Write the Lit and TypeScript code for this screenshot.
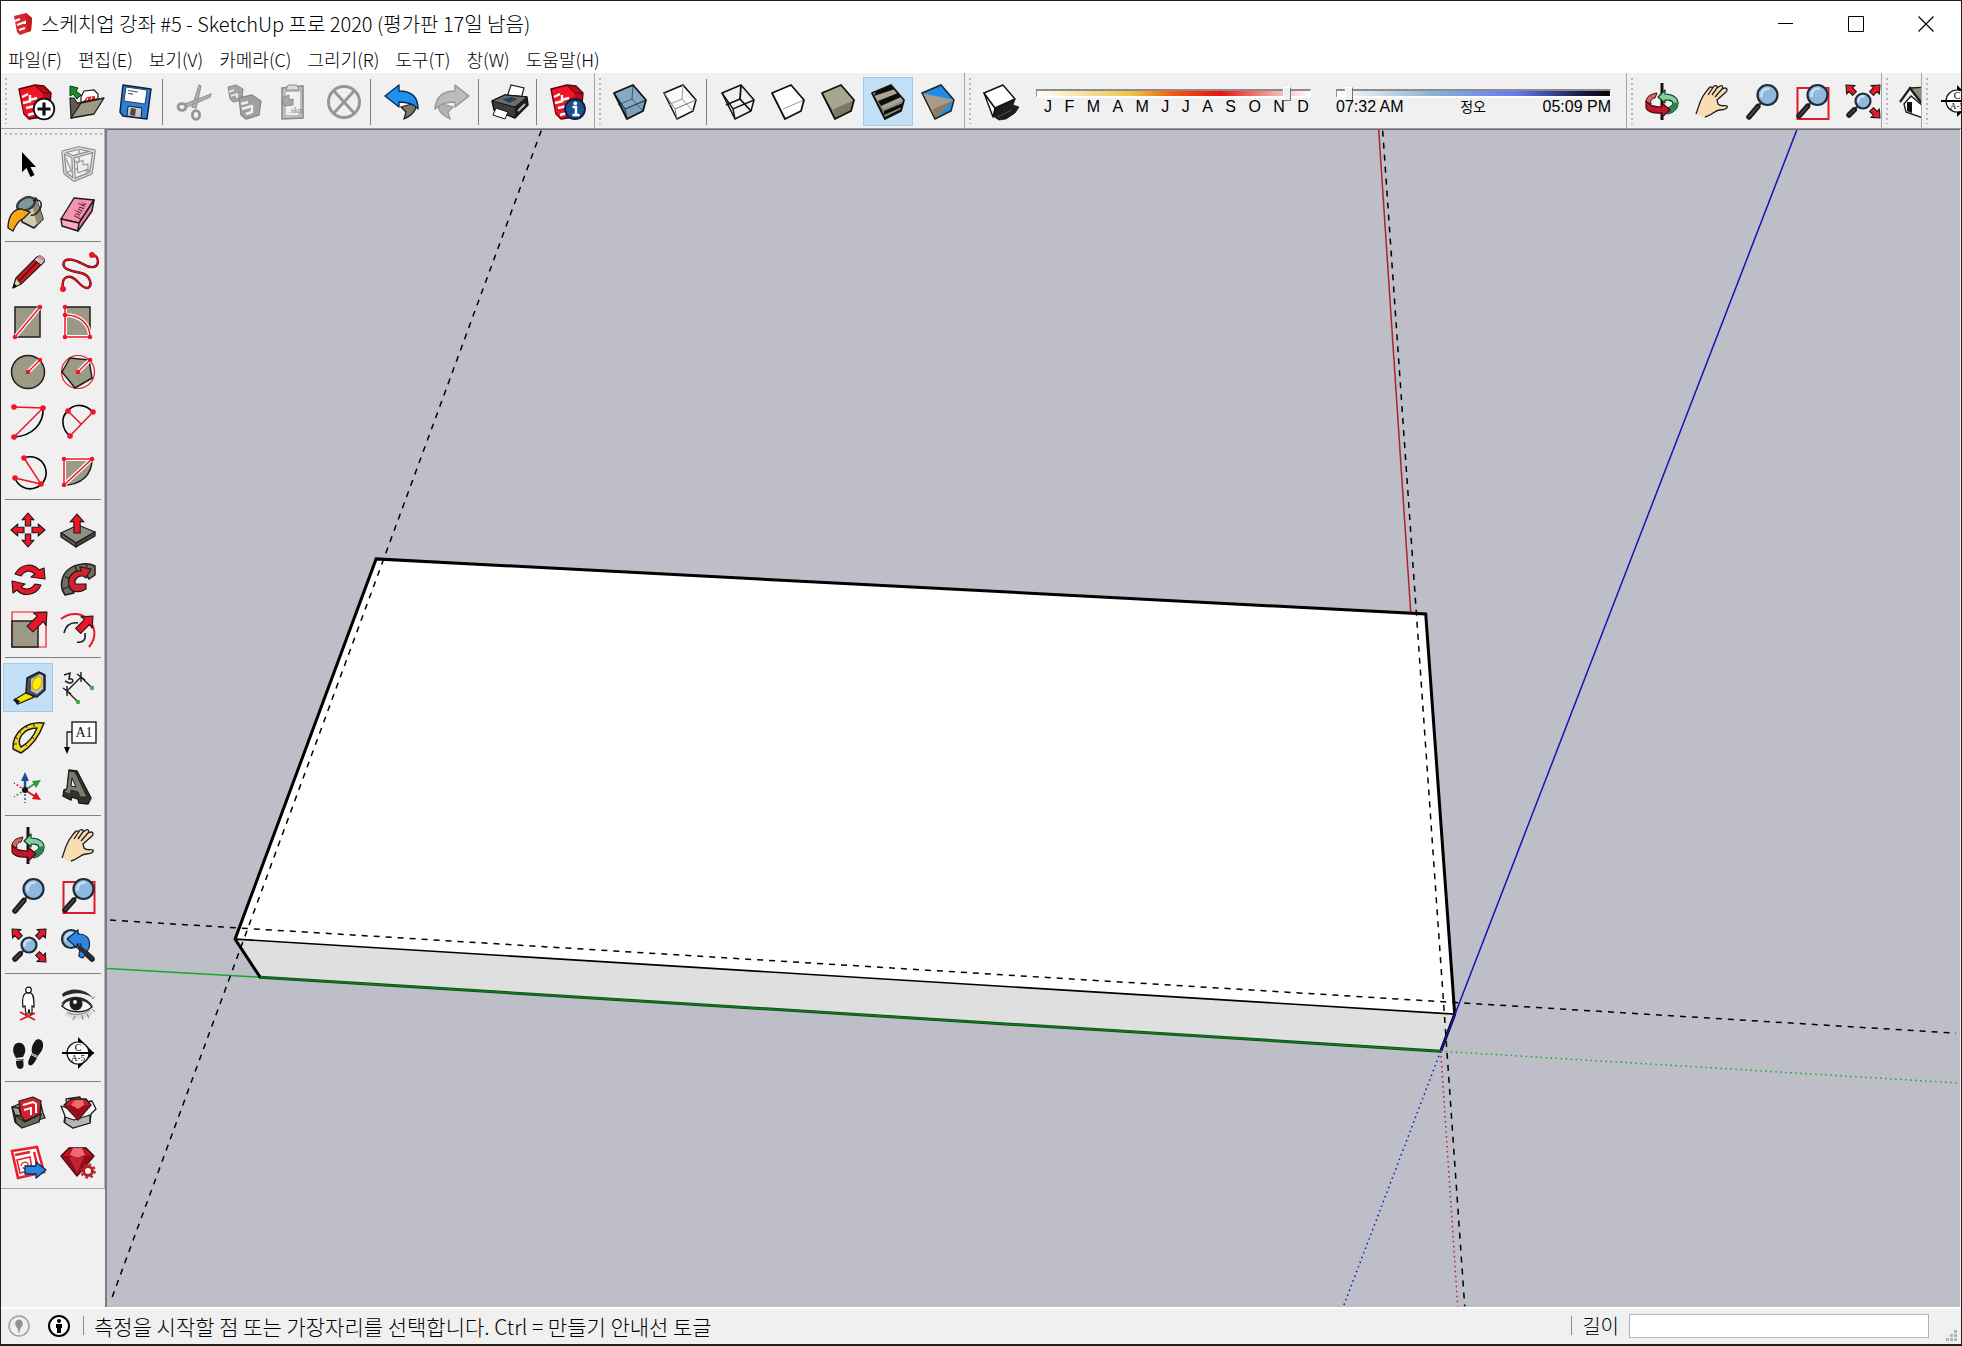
import { LitElement, html, svg, css } from "lit";
import type { TemplateResult } from "lit";
import { customElement, property } from "lit/decorators.js";
import { classMap } from "lit/directives/class-map.js";

type Shape = TemplateResult;

const K = "#1c1c1c";
const RED = "#ee1626";
const CLAY = "#9c9a85";

/* ---------- shared glyph parts, drawn on a 50 x 50 cell ---------- */

const lensAt = (cx: number, cy: number, r: number, hx: number, hy: number): Shape => {
  const d = Math.hypot(hx - cx, hy - cy);
  const ux = (hx - cx) / d;
  const uy = (hy - cy) / d;
  const mx = cx + ux * (r + 5);
  const my = cy + uy * (r + 5);
  return svg`
    <path d="M${cx + ux * r} ${cy + uy * r}L${hx} ${hy}" stroke="#444" stroke-width="2.5" fill="none"/>
    <path d="M${mx} ${my}L${hx} ${hy}" stroke=${K} stroke-width="5.5" stroke-linecap="round" fill="none"/>
    <path d="M${mx} ${my}L${hx} ${hy}" stroke="#4a4a4a" stroke-width="1.5" stroke-linecap="round" fill="none"/>
    <circle cx=${cx} cy=${cy} r=${r} fill="#8fb9dc" stroke="#1e2c3a" stroke-width="2.2"/>
    <path d="M${cx - r * 0.55} ${cy + r * 0.2}A${r * 0.6} ${r * 0.6} 0 0 1 ${cx + r * 0.2} ${cy - r * 0.6}" stroke="#c9e0f3" stroke-width="2.4" fill="none"/>`;
};

const arrow = (x: number, y: number, angle: number, len: number, w: number): Shape => svg`
  <path transform="translate(${x} ${y}) rotate(${angle})"
    d="M0 0L${-w} ${w * 1.15}L${-w * 0.45} ${w * 1.05}L${-w * 0.45} ${len}L${w * 0.45} ${len}L${w * 0.45} ${w * 1.05}L${w} ${w * 1.15}Z"
    fill=${RED} stroke=${K} stroke-width="1.1" stroke-linejoin="round"/>`;

const dots = (...pts: number[][]): Shape[] =>
  pts.map(([x, y]) => svg`<circle cx=${x} cy=${y} r="2.3" fill=${RED}/>`);

const halo = (d: string): Shape => svg`
  <path d=${d} fill="none" stroke="#fff" stroke-width="4"/>
  <path d=${d} fill="none" stroke=${RED} stroke-width="1.5"/>`;

const sheet = (a: string, b: string, line: string): Shape => svg`
  <path d="M8 12L24 8L33 9L40 16L38 39L18 42L13 37Z" fill=${a} stroke=${line} stroke-width="1.4" stroke-linejoin="round"/>
  <path d="M9 13L24 9L32 17L31 37L18 41L13 36Z" fill=${b}/>
  <path d="M24 8L32 16L40 16" fill="none" stroke=${line} stroke-width="1"/>
  <path d="M11 20L17 17M12 26L20 24M19 18V23L26 21" fill="none" stroke="#fff" stroke-width="2.4"/>
  <path d="M15 31L24 29V36L17 38" fill="none" stroke="#fff" stroke-width="2.4"/>`;

const TOP = "M9 16L28 8L41 23L20 32Z";
const FRONT = "M20 32L41 23L38 34L22 42Z";
const SIDE = "M9 16L20 32L22 42Z";
const HULL = "M9 16L28 8L41 23L38 34L22 42Z";

const cube = (top: string, front: string, side: string, extra: Shape = svg``): Shape => svg`
  <path d=${TOP} fill=${top}/><path d=${FRONT} fill=${front}/><path d=${SIDE} fill=${side}/>
  ${extra}
  <path d=${HULL} fill="none" stroke="#111" stroke-width="1.8" stroke-linejoin="round"/>`;

const inner = (c: string, w: number): Shape => svg`
  <path d="M9 16L20 32L41 23M20 32L22 42" fill="none" stroke=${c} stroke-width=${w}/>`;

const hidden = (c: string, w: number): Shape => svg`
  <path d="M28 8L27 22L13 28M27 22L38 34" fill="none" stroke=${c} stroke-width=${w}/>`;

const icons: Record<string, Shape> = {
  newFile: svg`${sheet("#b90d1b", RED, "#5a0008")}
    <circle cx="33" cy="32" r="10.3" fill="#fff" stroke="#111" stroke-width="1.8"/>
    <path d="M33 25.5V38.5M26.5 32H39.5" stroke="#111" stroke-width="3.2"/>`,
  open: svg`
    <path d="M20 20L23 14L33 13L37 17V28H20Z" fill="#fff" stroke=${K} stroke-width="1.2"/>
    <path d="M22 25L26 20L34 19V26Z" fill=${RED}/><path d="M25 25L27 21M29 25L31 20" stroke="#fff"/>
    <path d="M9 21L10 41L14 40L22 27L36 24V22L16 26L13 21Z" fill="#5f5d50" stroke=${K} stroke-width="1.2"/>
    <path d="M10 41L20 26L43 21L33 37Z" fill=${CLAY} stroke=${K} stroke-width="1.3" stroke-linejoin="round"/>
    <path d="M9 9L17 11L15 14L20 18L16 22L12 17L9 19Z" fill="#1e8a22" stroke="#083d0a" stroke-width="1"/>`,
  save: svg`
    <path d="M12 8L40 12L36 42L12 39L9 35Z" fill="#2f7fd6" stroke="#0d2340" stroke-width="1.5" stroke-linejoin="round"/>
    <path d="M15 10L36 13L34 27L13 24Z" fill="#fff" stroke="#0d2340" stroke-width=".8"/>
    <path d="M17 13.500L27 15M17 16.500L22 17.200" stroke="#555" stroke-width="1.2"/>
    <path d="M17 29L31 31L30 41L16 39Z" fill="#c4c4c4" stroke="#0d2340" stroke-width="1"/>
    <path d="M20 31L25 32L24 39L19 38Z" fill="#4a4a4a"/>`,
  cut: svg`<g stroke="#969696">
    <path d="M30 8L32 9L27 31L23 30ZM42 17L41 20L18 30L16 27Z" fill="#b4b4b4" stroke-width="1.200"/>
    <ellipse cx="13" cy="30" rx="4" ry="3.400" fill="none" stroke-width="2.800"/><ellipse cx="27" cy="38" rx="3.600" ry="4.400" fill="none" stroke-width="2.800"/></g>`,
  copy: svg`<g stroke="#8a8a8a" stroke-linejoin="round">
    <path d="M9 10L17 8L24 12L23 23L14 25L11 22Z" fill="#a3a3a3"/>
    <path d="M10 15L15 13M12 19L18 17V21" fill="none" stroke="#f0f0f0" stroke-width="1.800"/>
    <path d="M20 21L33 18L42 24L40 38L27 42L22 38Z" fill="#a0a0a0" stroke-width="1.400"/>
    <path d="M22 27L29 25M23 32L33 29V35L27 37" fill="none" stroke="#f0f0f0" stroke-width="2.400"/></g>`,
  paste: svg`<g stroke="#8c8c8c"><path d="M13 11L34 9V41L13 42Z" fill="#bdbdbd" stroke-width="1.600"/>
    <path d="M17 15H31V38H17Z" fill="#f1f1f1" stroke="none"/>
    <path d="M19 8H28L30 13H17Z" fill="#dcdcdc"/>
    <path d="M13 21L20 18V23L24 22V28L15 29Z" fill="#a8a8a8"/></g>
    <text x="20" y="36" font-size="8" font-family="Liberation Serif, serif" fill="#7c7c7c">.skp</text>`,
  stop: svg`<ellipse cx="25" cy="25" rx="15.500" ry="15.500" fill="none" stroke="#969696" stroke-width="3"/>
    <path d="M15 14L35 36M35 14L15 36" stroke="#969696" stroke-width="3"/>`,
  undo: svg`<path d="M24 30L39 26C40 33 36 38 27 42L29 35Z" fill="#7a796a" stroke=${K} stroke-width="1.200"/>
    <path d="M8 19L22 8V14C34 14 41 20 41 32C37 27 32 25 22 25V30Z" fill="#1e90ee" stroke="#0b2b4a" stroke-width="1.400" stroke-linejoin="round"/>`,
  redo: svg`<path d="M26 30L12 26C10 33 14 38 23 42L21 35Z" fill="#b3b3b3" stroke="#969696" stroke-width="1.200"/>
    <path d="M42 19L28 8V14C16 14 9 20 8 32C13 27 18 25 28 25V30Z" fill="#bcbcbc" stroke="#969696" stroke-width="1.400" stroke-linejoin="round"/>`,
  print: svg`
    <path d="M22 20L26 8L39 11L36 22Z" fill="#fff" stroke=${K} stroke-width="1.200"/>
    <path d="M7 24L20 18L42 20L43 28L30 41L9 33Z" fill="#3c3c3c" stroke="#111" stroke-width="1.400" stroke-linejoin="round"/>
    <path d="M7 24L20 18L42 20L30 30Z" fill="#6d6d6d" stroke="#111"/>
    <path d="M17 22L27 20L33 22L24 26Z" fill="#24425f"/>
    <path d="M30 30L42 21V28L30 40Z" fill="#1d1d1d"/><path d="M33 34L40 27" stroke="#bbb" stroke-width="2"/>
    <path d="M11 31L23 35L20 42L8 38Z" fill="#fff" stroke="#111"/>`,
  info: svg`${sheet("#b90d1b", RED, "#5a0008")}
    <circle cx="32" cy="32" r="10" fill="#1d4f91" stroke="#0b1f3c" stroke-width="1.800"/>
    <path d="M29.500 30H33V38M29.500 38H36.500" stroke="#fff" stroke-width="2.400" fill="none"/><circle cx="32.300" cy="26.300" r="1.900" fill="#fff"/>`,
  xray: cube("#86aac3", "#7ba0b9", "#6b91ab", svg`${hidden("#3d5a6e", 1)}${inner("#22394a", 1.2)}`),
  backEdges: svg`<path d=${HULL} fill="#fbfbfb" stroke="#111" stroke-width="1.500"/>${hidden("#999", 1)}${inner("#777", 1)}`,
  wireframe: svg`<path d=${HULL} fill="none" stroke="#111" stroke-width="1.500"/>${hidden("#111", 1.8)}${inner("#111", 1.4)}`,
  hiddenLine: cube("#fff", "#fff", "#fff", svg`<path d="M20 32L41 23" stroke="#999" stroke-width="1"/>`),
  shaded: cube("#a8a690", "#7b7967", "#8c8a76"),
  textured: cube("#a8a690", "#8c8a76", "#6b695a", svg`
    <path d="M13 14.500L28 8L32 12L11 19ZM15 24L35 16L38 20L18 29ZM21 34L40 26L39 30L21 38ZM22 42L38 34V32L22 40Z" fill="#0c0c0c"/>`),
  mono: svg`<path d=${HULL} fill="#1e8cec"/><path d="M9 16L41 23L22 42Z" fill="#a79d88"/>
    <path d="M20 32L41 23L22 42Z" fill="#8a7c67"/><path d="M38 25L38 34L27 39Z" fill="#1e8cec"/>
    <path d=${HULL} fill="none" stroke="#222" stroke-width="1.500"/>`,
  shadow: svg`<path d="M19 31L40 22L38 28L44 30L40 36L31 42L24 43L18 39Z" fill="#1c1c1c" stroke="#111" stroke-width=".8"/>
    <path d="M9 16L20 31L18 40Z" fill="#fff" stroke="#111" stroke-width="1.400" stroke-linejoin="round"/>
    <path d="M9 16L28 8L40 22L20 31Z" fill="#fff" stroke="#111" stroke-width="1.400" stroke-linejoin="round"/>
    <path d="M22 40L37 33" stroke="#4c4c4c" stroke-width="1"/>`,
  select: svg`<path d="M19 13V33L23.500 29L27.500 38L31.500 36L27.500 28H33Z" fill="#000"/>`,
  component: svg`<g fill="none" stroke="#8a8a8a" stroke-width="3.600" stroke-linejoin="round">
    <path d="M10 13L26 9L41 12L38 34L21 41L12 34Z"/><path d="M10 13L20 18L41 12M20 18L21 41"/></g>
    <g fill="none" stroke="#a2a2a2" stroke-width="1.600"><path d="M26 9V29L12 34M26 29L38 34M12 18L21 37M22 22L37 32"/></g>
    <g fill="none" stroke="#dedede" stroke-width="1.300"><path d="M10 13L26 9L41 12L38 34L21 41L12 34Z"/><path d="M10 13L20 18L41 12M20 18L21 41"/></g>
    <path d="M24 24L30 21V26L35 25V30L25 34Z" fill="#ececec" stroke="#8a8a8a"/>`,
  bucket: svg`
    <path d="M17 14L33 9L40 30L31 39L19 33Z" fill="#cfcbab" stroke=${K} stroke-width="1.600" stroke-linejoin="round"/>
    <path d="M28 12L34 11L40 30L34 36Z" fill="#8c8a72"/>
    <ellipse cx="23" cy="15" rx="9.500" ry="6" transform="rotate(-28 23 15)" fill="#7c9a9a" stroke="#3a3a36" stroke-width="2.400"/>
    <path d="M18 20C10 20 5 28 5 39L10 42C13 35 17 31 21 29L27 23Z" fill="#f7a614" stroke=${K} stroke-width="1.300"/>
    <path d="M30 12C37 9 40 14 37 20C35 24 31 27 28 26" fill="none" stroke=${K} stroke-width="1.500"/>`,
  eraser: svg`<g stroke=${K} stroke-width="1.400" stroke-linejoin="round">
    <path d="M8 30L21 9L41 11L26 34Z" fill="#f793b0"/><path d="M8 30L26 34L25 42L9 37Z" fill="#ffa9bf"/>
    <path d="M26 34L41 11L39 22L25 42Z" fill="#ee7d9b"/></g>
    <text x="25" y="30" transform="rotate(-62 25 30)" font-size="10" font-family="Liberation Serif, serif" fill="#3a0d1c">pink</text>`,
  pencil: svg`<path d="M10 41L13 31L34 10L41 15L18 37Z" fill="#d61a22" stroke=${K} stroke-width="1.300" stroke-linejoin="round"/>
    <path d="M16 34L37 12" stroke="#7c0a10" stroke-width="2.500"/>
    <path d="M34 10C37 7 43 11 41 15L38 18L31 13Z" fill="#c4c0c4" stroke=${K}/><path d="M36 9C39 8 42 11 41 14L35 11Z" fill="#e8768c"/>
    <path d="M10 41L13 31L18 37Z" fill="#e8cf9a" stroke=${K}/><path d="M10 41L11.500 37L14 39Z" fill="#000"/>`,
  freehand: svg`<path d="M10 41C8 31 14 29 18 30C25 32 28 42 35 41C40 38 37 28 28 26C18 24 8 22 11 15C14 10 24 14 30 17C36 21 44 22 45 15C45 10 42 8 39 8" fill="none" stroke="#5a060c" stroke-width="2.400"/>
    <path d="M10 41C8 31 14 29 18 30C25 32 28 42 35 41C40 38 37 28 28 26C18 24 8 22 11 15C14 10 24 14 30 17C36 21 44 22 45 15C45 10 42 8 39 8" fill="none" stroke="#dc1322" stroke-width="1.500"/>
    <circle cx="10" cy="42" r="3" fill=${RED}/><circle cx="39" cy="8" r="3" fill=${RED}/>`,
  rect: svg`<rect x="12" y="10" width="25" height="30" fill=${CLAY} stroke=${K} stroke-width="1.500"/>${halo("M12 40L37 10")}${dots([12, 40], [37, 10])}`,
  rotRect: svg`<rect x="12" y="10" width="25" height="30" fill=${CLAY} stroke=${K} stroke-width="1.500"/>
    ${halo("M12 10V40H37C37 27 27 18 12 18")}${dots([12, 10], [12, 18], [12, 40], [37, 40])}`,
  circle: svg`<circle cx="25" cy="25" r="16.500" fill=${CLAY} stroke=${K} stroke-width="1.500"/>${halo("M25 25L37 13")}${dots([25, 25], [37, 13])}`,
  polygon: svg`<circle cx="25" cy="25" r="16.500" fill="none" stroke=${RED} stroke-width="1.200"/>
    <path d="M9 25L17 11L36 13L39 31L22 41Z" fill=${CLAY} stroke=${K} stroke-width="1.500"/>${halo("M25 25L37 13")}${dots([25, 25], [37, 13])}`,
  arc: svg`<path d="M40 11C41 26 30 39 11 40" fill="none" stroke="#000" stroke-width="1.600"/>
    <path d="M11 10L40 11L11 40" fill="none" stroke=${RED} stroke-width="1.500"/>
    <circle cx="11" cy="10" r="2.800" fill=${RED}/><circle cx="40" cy="11" r="2.800" fill=${RED}/><circle cx="11" cy="40" r="2.800" fill=${RED}/>`,
  arc2: svg`<path d="M40 15C29 4 18 9 15 14C7 20 9 33 17 39" fill="none" stroke="#000" stroke-width="1.600"/>
    <path d="M17 39L40 15M15 14L28 27" fill="none" stroke=${RED} stroke-width="1.500"/>
    <circle cx="15" cy="14" r="2.800" fill=${RED}/><circle cx="40" cy="15" r="2.800" fill=${RED}/><circle cx="17" cy="39" r="2.800" fill=${RED}/>`,
  arc3: svg`<path d="M21 11A16 16 0 1 1 12 31" fill="none" stroke="#000" stroke-width="1.600"/>
    <path d="M21 11L38 37L12 31" fill="none" stroke=${RED} stroke-width="1.500"/>
    <circle cx="21" cy="11" r="2.800" fill=${RED}/><circle cx="12" cy="31" r="2.800" fill=${RED}/><circle cx="38" cy="37" r="2.800" fill=${RED}/>`,
  pie: svg`<path d="M11 12H39C39 28 28 38 11 38Z" fill=${CLAY} stroke=${K} stroke-width="1.500"/>${halo("M11 38V12H39Z")}${dots([11, 12], [39, 12], [11, 38])}`,
  move: svg`${arrow(25, 8, 0, 13, 6)}${arrow(42, 25, 90, 13, 6)}${arrow(25, 42, 180, 13, 6)}${arrow(8, 25, 270, 13, 6)}`,
  pushPull: svg`<g stroke=${K} stroke-width="1.300" stroke-linejoin="round">
    <path d="M8 28L25 20L42 27L23 38Z" fill="#8e8f80"/><path d="M8 28L23 38V42L8 32Z" fill="#5d5e52"/><path d="M23 38L42 27V31L23 42Z" fill="#45463d"/></g>
    ${arrow(24, 9, 0, 19, 7)}`,
  rotate: svg`<g fill=${RED} stroke=${K} stroke-width="1.200" stroke-linejoin="round">
    <path d="M12 19C18 8 30 8 36 15L41 13L42 24L28 22L32 19C27 14 21 16 18 21Z"/>
    <path d="M38 30C33 41 20 42 14 35L10 38L9 26L22 29L18 32C23 36 29 34 32 29Z"/></g>`,
  followMe: svg`<path d="M12 40C6 32 8 20 16 14C22 9 34 7 42 11L42 20L36 24C33 18 28 17 23 21C17 26 17 33 21 38Z" fill="#6f6c62" stroke=${K} stroke-width="1.500" stroke-linejoin="round"/>
    <path d="M10 34L18 31M12 22L20 24M22 11L25 19M34 9L33 17" stroke="#2a2925" stroke-width="1.300"/>
    <path d="M16 31C14 22 20 15 28 16L27 12L38 14L33 23L30 21C25 20 21 25 22 29H33V34C27 38 18 38 16 31Z" fill="#d2222d" stroke=${K} stroke-width="1.200"/>`,
  scale: svg`<path d="M9 7H43V42H9Z" fill="#f8eeee" stroke=${RED} stroke-width="1.200"/>
    <rect x="9" y="16" width="26" height="26" fill=${CLAY} stroke=${K} stroke-width="1.500"/>${arrow(44, 7, 45, 24, 9)}`,
  offset: svg`<path d="M8 14C18 6 30 8 37 16C43 24 43 34 36 42" fill="none" stroke=${RED} stroke-width="2"/>
    <path d="M11 28C13 20 18 17 25 18M32 28C33 35 30 38 24 37" fill="none" stroke=${K} stroke-width="1.600"/>${arrow(40, 11, 45, 21, 8)}`,
  tape: svg`<path d="M24 29L31 34L15 41L11 37Z" fill="#f5e400" stroke=${K} stroke-width="1.300"/><path d="M11 35L17 38L14 42Z" fill="#111"/>
    <path d="M24 15L36 9L42 12V27L34 34L23 30Z" fill="#4a4f57" stroke=${K} stroke-width="1.500" stroke-linejoin="round"/>
    <path d="M28 16L37 11L40 13V26L34 31L28 28Z" fill="#c2c6c8"/><ellipse cx="34" cy="20.500" rx="4.500" ry="7" transform="rotate(22 34 20.500)" fill="#ffee00" stroke="#b8a400"/>`,
  dimension: svg`<path d="M14 28L28 14M14 28L24 38M28 14L38 24M14 23V33M10 25L18 31M28 9V19M24 11L32 17" stroke=${K} stroke-width="1.400" fill="none"/>
    <path d="M11 12L17 10L16 16C21 15 21 20 16 20L12 18" stroke=${K} stroke-width="1.500" fill="none"/>
    <circle cx="25" cy="39" r="2.200" fill="#44a844"/><circle cx="39" cy="25" r="2.200" fill="#44a844"/>`,
  protractor: svg`<path fill-rule="evenodd" d="M41 10C24 8 9 19 10 36L18 40C28 34 36 24 41 10ZM34 15C31 23 25 30 18 34C13 27 20 15 34 15Z" fill="#f0d820" stroke=${K} stroke-width="1.500" stroke-linejoin="round"/>
    <path d="M11 31H14M12 24L15 26M16 18L18 20M23 13L24 15M31 11V14M24 33L22 31M31 26L29 24" stroke=${K} stroke-width="1"/>`,
  label: svg`<rect x="19" y="9" width="24" height="21" fill="#fff" stroke=${K} stroke-width="1.400"/>
    <text x="31" y="24" text-anchor="middle" font-family="Liberation Serif, serif" font-size="14" fill="#111">A1</text>
    <path d="M19 19H14V36" fill="none" stroke=${K} stroke-width="1.300"/><path d="M11 34H17L14 41Z" fill="#000"/>`,
  axes: svg`<path d="M22 27V15" stroke="#1c4d9a" stroke-width="2.500"/><path d="M18 18L22 9L26 18Z" fill="#1c4d9a"/>
    <path d="M22 27L33 20" stroke="#2b9a3c" stroke-width="1.800"/><path d="M29 18L38 17L33 25Z" fill="#2b9a3c"/>
    <path d="M22 27L33 34" stroke="#d11" stroke-width="1.800"/><path d="M29 36L38 37L33 29Z" fill="#d11"/>
    <path d="M22 27L11 20" stroke="#d11" stroke-width="1.500" stroke-dasharray="2 2"/><path d="M22 27L11 34" stroke="#2b9a3c" stroke-width="1.500" stroke-dasharray="2 2"/>
    <path d="M22 27V40" stroke="#1c4d9a" stroke-width="1.500" stroke-dasharray="2 2"/><circle cx="22" cy="27" r="3" fill="#111"/>`,
  text3d: svg`<path fill-rule="evenodd" d="M16 7L24 8L38 35L35 41L26 40L25 36L19 34L18 37L10 33L11 27L14 26Z" fill="#34332e" stroke=${K} stroke-width="1.500" stroke-linejoin="round"/>
    <path d="M16 8L22 9L34 34L27 34L25 29L18 27L17 31L11 29L14 26Z" fill="#7d7b70" stroke=${K} stroke-width=".8"/><path d="M19 15L18 23L23 24Z" fill="#efefef" stroke=${K}/>`,
  orbit: svg`
    <path d="M25 6V43" stroke="#151515" stroke-width="3"/>
    <path d="M21 20L28 13V17C36 17 41 21 41 26C41 32 37 35 31 37L29 31C34 30 36 28 36 26C35 23 32 23 28 23V26Z" fill="#7fcf9f" stroke="#133d22" stroke-width="1.200" stroke-linejoin="round"/>
    <path d="M41 25C41 32 37 35 31 37L29 31C34 30 36 28 36 26Z" fill="#2b8650"/>
    <path d="M9 25C9 20 13 17 20 16L18 21C14 22 13 24 14 27Z" fill="#d4666a" stroke="#420a0e"/>
    <path d="M9 24C12 29 17 30 25 30V26L33 33L25 40V36C16 37 9 34 9 30Z" fill="#c0172b" stroke="#420a0e" stroke-width="1.200" stroke-linejoin="round"/>`,
  hand: svg`<path d="M9 37C11 32 12 27 14 23C16 18 19 15 22 11C24 9 26 10 25 12L27 9C29 8 31 9 30 11L33 9C35 8 37 10 35 12L38 11C40 11 41 13 39 15L30 23L31 27C34 30 38 28 40 29C41 31 38 33 33 33C28 33 24 39 17 41Z" fill="#f8ddb2"/>
    <path d="M9 37C11 32 12 27 14 23C16 18 19 15 22 11C24 9 26 10 25 12L21 18M25 12L27 9C29 8 31 9 30 11L25 18M30 11L33 9C35 8 37 10 35 12L28 20M35 12L38 11C40 11 41 13 39 15L30 23L31 27C34 30 38 28 40 29C41 31 38 33 33 33C28 33 24 39 18 40" fill="none" stroke=${K} stroke-width="1.300"/>`,
  zoom: lensAt(30.5, 18, 10, 12, 40),
  zoomWindow: svg`<rect x="10.500" y="11" width="31" height="31" fill="none" stroke="#e01a28" stroke-width="2"/>${lensAt(30.5, 18, 10, 12, 39)}`,
  zoomExtents: svg`${arrow(9, 8, -45, 12, 6)}${arrow(43, 8, 45, 12, 6)}${arrow(43, 41, 135, 12, 6)}${lensAt(26, 24, 7.5, 12, 38)}`,
  previous: svg`${lensAt(18, 18, 9, 39, 38)}
    <path d="M14 18L25 9V13C34 13 38 18 36 27L30 37C28 37 25 35 26 34L28 23H24V27Z" fill="#2f86e0" stroke="#0b2b4a" stroke-width="1.200"/>
    <path d="M27 27L39 37" stroke="#2b2b2b" stroke-width="4.500" stroke-linecap="round"/>`,
  camera: svg`<path d="M17 33L32 41M32 34L17 41" stroke="#e01a28" stroke-width="1.800"/>
    <path d="M23 14C19 16 19 21 20 28L22 27L23 35H25L26 30L27 35H29L29 27L31 28C31 21 31 16 28 14Z" fill="#fff" stroke="#111" stroke-width="1.200"/>
    <circle cx="25.500" cy="11" r="2.800" fill="#fff" stroke="#111" stroke-width="1.200"/>`,
  look: svg`<path d="M9 15C17 8 32 9 40 19C31 13 19 13 10 18Z" fill="#2a2a2a"/>
    <path d="M11 36C13 31 20 37 28 36C34 35 38 31 41 33C36 40 22 42 11 36Z" fill="#dcdcdc"/>
    <path d="M9 27C15 17 31 17 39 28C31 35 16 34 9 27Z" fill="#f8f8f8" stroke="#222" stroke-width="1.500"/>
    <path d="M8 25C15 15 32 15 40 27C31 20 17 20 8 25Z" fill="#2d2d2d"/>
    <circle cx="23" cy="25" r="6.500" fill="#1c1c1c"/><circle cx="22" cy="23" r="1.900" fill="#fff"/>
    <path d="M14 33C20 37 31 36 37 31M22 37L20 41M29 36L30 41M34 35L36 39" fill="none" stroke="#8c8c8c" stroke-width="1.200"/><path d="M39 20L42 18M39 30L42 33" stroke="#777"/>`,
  walk: svg`<g fill="#161616"><path d="M11 17C13 12 21 13 22 19C23 23 21 26 20 28L13 29C11 25 9 22 11 17Z"/><path d="M13 32L20 31C21 36 21 40 17 40C14 40 13 36 13 32Z"/>
    <path d="M32 12C35 8 41 11 40 17C40 21 37 24 35 27L29 24C28 20 29 16 32 12Z"/><path d="M28 26L34 29C32 33 29 38 26 36C24 34 26 30 28 26Z"/></g>
    <path d="M13 30.500H21M28 25L35 28" stroke="#777" stroke-width="1"/>`,
  section: svg`<path d="M25 8L41 24L25 40Z" fill="#000"/><circle cx="25" cy="24" r="11" fill="#fff" stroke="#111" stroke-width="1.200"/>
    <path d="M9 24H41" stroke="#000" stroke-width="2"/>
    <text x="25" y="22" text-anchor="middle" font-size="10" font-family="Liberation Serif, serif">C</text>
    <text x="25" y="32" text-anchor="middle" font-size="9" font-family="Liberation Serif, serif">A-5</text>`,
  warehouse: svg`<g stroke=${K} stroke-width="1.300" stroke-linejoin="round">
    <path d="M9 20L16 17L34 14L38 18L40 26L42 31L35 33L19 40L12 35Z" fill="#8a8674"/>
    <path d="M16 14L30 10L38 14L37 27L22 34L18 29Z" fill="#d6202c"/><path d="M12 28L22 35L38 27L36 35L19 41L13 36Z" fill="#6b685a"/><path d="M9 20L16 21L18 29L12 28Z" fill="#a5a18c"/></g>
    <path d="M20 18L30 15L33 17V26M21 23L28 21V28" fill="none" stroke="#fff" stroke-width="2"/>`,
  extWarehouse: svg`<g stroke=${K} stroke-width="1.300" stroke-linejoin="round">
    <path d="M8 19L14 21L13 12L27 10L29 16L39 14L43 22L38 27L37 36L20 41L11 35L12 29Z" fill="#f4f4f4"/>
    <path d="M12 30L21 33L37 28V36L20 41L12 36Z" fill="#b5b5b5"/>
    <path d="M11 18L18 12H33L38 18L25 33Z" fill="#d11a2a"/></g>
    <path d="M11 18H38L25 33Z" fill="#970d1a"/><path d="M18 18L22 13L30 13L31 18L25 22Z" fill="#f06a70"/>`,
  layout: svg`<path d="M9 14L34 10L41 35L15 41Z" fill="#fff" stroke="#e8202c" stroke-width="2.600"/>
    <path d="M12 18L27 15M31 15L34 27" fill="none" stroke="#e8202c" stroke-width="2.400"/>
    <path d="M14 23L27 20L29 33L17 36Z" fill="none" stroke="#e8202c" stroke-width="1.600"/>
    <path d="M18 29C19 24 25 24 25 28C25 32 20 33 20 30" fill="none" stroke="#e8202c" stroke-width="1.300"/>
    <path d="M22 29H33V25L43 33L33 41V37H22Z" fill="#2a86e0" stroke="#0b2b4a" stroke-width="1.300" stroke-linejoin="round"/>`,
  extManager: svg`<path d="M8 19L16 11H33L41 19L24 39Z" fill="#c01222" stroke="#300408" stroke-width="1.300" stroke-linejoin="round"/>
    <path d="M8 19H41L24 39Z" fill="#8f0c18"/><path d="M17 18L20 11H29L32 18L24 21Z" fill="#ef6a72"/><path d="M16 20L24 36L31 20Z" fill="#c02530"/>
    <circle cx="35" cy="34" r="4.500" fill="#f0f0f0" stroke="#b5202c" stroke-width="3"/><circle cx="35" cy="34" r="6.800" fill="none" stroke="#b5202c" stroke-width="2" stroke-dasharray="2.700 2.700"/>`,
  house: svg`<path d="M12 27L19 19L31 29V41L14 35Z" fill="#fff" stroke=${K} stroke-width="1.400"/>
    <path d="M18 11L36 10L46 25L31 28L22 17Z" fill="#8f8c79" stroke=${K} stroke-width="1.400"/>
    <path d="M8 25L18 11L31 28" fill="none" stroke=${K} stroke-width="2.200"/><path d="M15 25H20V36L15 34Z" fill="#111"/>`,
};

interface Tool { icon: string; name: string; on?: boolean; off?: boolean }
const t = (icon: string, name: string, flags: Partial<Tool> = {}): Tool => ({ icon, name, ...flags });

@customElement("tool-button")
class ToolButton extends LitElement {
  @property({ attribute: false }) tool!: Tool;

  static styles = css`
    :host { display: block; flex: none; width: 50px; height: 50px; }
    button {
      display: block; width: 100%; height: 49px; margin: 0; padding: 0;
      border: 1px solid transparent; background: none; overflow: visible;
    }
    button.on { background: #c2dff5; border-color: #9fcbee; }
    svg { display: block; width: 50px; height: 50px; margin: -1px; }
  `;

  render() {
    const { icon, name, on = false, off = false } = this.tool;
    return html`<button type="button" class=${classMap({ on })} aria-label=${name} aria-pressed=${on} ?disabled=${off}>
      <svg viewBox="0 0 50 50" aria-hidden="true">${icons[icon]}</svg>
    </button>`;
  }
}

const fileTools: Tool[][] = [
  [t("newFile", "새로 만들기"), t("open", "열기"), t("save", "저장")],
  [t("cut", "잘라내기", { off: true }), t("copy", "복사", { off: true }), t("paste", "붙여넣기", { off: true }), t("stop", "지우기", { off: true })],
  [t("undo", "실행 취소"), t("redo", "다시 실행", { off: true })],
  [t("print", "인쇄")],
  [t("info", "모델 정보")],
];
const styleTools: Tool[][] = [
  [t("xray", "X레이"), t("backEdges", "뒤쪽 가장자리")],
  [t("wireframe", "와이어프레임"), t("hiddenLine", "은선"), t("shaded", "음영"), t("textured", "텍스처 음영", { on: true }), t("mono", "단색")],
];
const cameraTools: Tool[][] = [
  [t("orbit", "궤도"), t("hand", "이동 보기"), t("zoom", "확대/축소"), t("zoomWindow", "창 확대/축소"), t("zoomExtents", "범위 확대/축소")],
];
const sideTools: Tool[][] = [
  [t("select", "선택"), t("component", "구성 요소 만들기", { off: true }), t("bucket", "페인트통"), t("eraser", "지우개")],
  [t("pencil", "선"), t("freehand", "자유형"), t("rect", "직사각형"), t("rotRect", "회전된 직사각형"), t("circle", "원"),
    t("polygon", "다각형"), t("arc", "호"), t("arc2", "2점 호"), t("arc3", "3점 호"), t("pie", "파이")],
  [t("move", "이동"), t("pushPull", "밀기/끌기"), t("rotate", "회전"), t("followMe", "따라가기"), t("scale", "배율"), t("offset", "오프셋")],
  [t("tape", "줄자 도구", { on: true }), t("dimension", "치수"), t("protractor", "각도기"), t("label", "텍스트"), t("axes", "축"), t("text3d", "3D 텍스트")],
  [t("orbit", "궤도"), t("hand", "이동 보기"), t("zoom", "확대/축소"), t("zoomWindow", "창 확대/축소"), t("zoomExtents", "범위 확대/축소"), t("previous", "이전")],
  [t("camera", "카메라 배치"), t("look", "둘러보기"), t("walk", "걷기"), t("section", "단면")],
  [t("warehouse", "3D Warehouse"), t("extWarehouse", "Extension Warehouse"), t("layout", "LayOut으로 보내기"), t("extManager", "확장 관리자")],
];

const menus = ["파일(F)", "편집(E)", "보기(V)", "카메라(C)", "그리기(R)", "도구(T)", "창(W)", "도움말(H)"];

const row = (groups: Tool[][]) =>
  groups.map((g, i) => html`${i ? html`<span class="sep"></span>` : ""}${g.map((x) => html`<tool-button .tool=${x}></tool-button>`)}`);

@customElement("model-view")
class ModelView extends LitElement {
  static styles = css`
    :host { display: block; flex: 1; min-width: 0; position: relative; overflow: hidden; background: #bebec8; }
    svg { position: absolute; inset: 0; width: 100%; height: 100%; }
    .guide { stroke: #000; stroke-width: 1.5; stroke-dasharray: 6 6; }
    .edge { stroke: #000; stroke-width: 3; stroke-linecap: round; fill: none; }
    .thin { stroke: #000; stroke-width: 1.6; }
    .axis { stroke-width: 1.5; }
    .back { stroke-width: 1.5; stroke-dasharray: 1.5 3.5; }
    .r { stroke: #b3202c; } .g { stroke: #18a828; } .b { stroke: #1414b4; }
  `;

  render() {
    return html`<svg viewBox="107 130 1852 1177" preserveAspectRatio="xMidYMid slice" role="img" aria-label="모델">
      <path class="axis g" d="M100 968L260 977"/>
      <path d="M376 559L1425 614L1454 1014L235 939Z" fill="#fff"/>
      <path d="M235 939L1454 1014L1440 1051L260 977Z" fill="#dfdfdf"/>
      <path class="axis r" d="M1378 130L1410 612"/>
      <path class="thin" d="M235 939L1454 1014"/>
      <path class="edge" d="M260 977L235 939L376 559L1425 614L1454 1014L1440 1051"/>
      <path d="M260 977L1440 1051" stroke="#0b4a12" stroke-width="3"/>
      <path d="M260 977L1440 1051" stroke="#117a1c" stroke-width="1.500"/>
      <path class="axis b" d="M1796 130L1440 1051"/>
      <path class="back g" d="M1440 1051L1960 1083"/>
      <path class="back b" d="M1440 1051L1342 1308"/>
      <path class="back r" d="M1440 1051L1457 1306"/>
      <path class="guide" d="M541 131L111 1300"/>
      <path class="guide" d="M1382 131L1464 1306"/>
      <path class="guide" d="M110 920L1955 1033"/>
    </svg>`;
  }
}

@customElement("app-root")
class AppRoot extends LitElement {
  static styles = css`
    :host {
      display: flex; flex-direction: column; box-sizing: border-box; min-height: 100vh;
      border: 1px solid #231f20; border-bottom-width: 2px;
      background: #f0f0f0; color: #000;
      font: 300 18px/24px "Noto Sans CJK KR", sans-serif;
    }
    button, input { font: inherit; color: inherit; }
    header { background: #fff; }
    .title { display: flex; align-items: center; height: 45px; padding-left: 11px; }
    .title h1 { flex: 1; margin: 0 0 0 7px; font-size: 20px; font-weight: inherit; }
    .logo { width: 22px; height: 24px; }
    .win { width: 70px; height: 44px; padding: 0; border: 0; background: none; }
    .win svg { display: block; width: 16px; height: 16px; margin: auto; }
    nav { display: flex; gap: 16px; height: 27px; padding-left: 7px; }
    nav button { padding: 0; border: 0; background: none; line-height: 27px; white-space: nowrap; }

    .bar { display: flex; overflow: hidden; border-bottom: 1px solid #9a9a9a; }
    .group { display: flex; flex: none; align-items: flex-start; padding: 4px 1px 1px 10px; border-right: 1px solid #a6a6a6; position: relative; overflow: hidden; }
    .group::before {
      content: ""; position: absolute; left: 4px; top: 5px; bottom: 4px; width: 2px;
      background: repeating-linear-gradient(#b8b8b8 0 2px, transparent 2px 5px);
    }
    .camera { width: 243px; }
    .views { width: 28px; }
    .last { flex: 1; min-width: 0; border-right: 0; }
    .sep { flex: none; width: 2px; margin: 2px 5px 2px 1px; height: 46px; box-sizing: border-box; border-left: 1px solid #808080; }
    .scale { width: 275px; margin: 9px 0 0 11px; font: 16px/18px "Liberation Sans", "Noto Sans CJK KR", sans-serif; }
    .scale + .scale { margin-left: 25px; margin-right: 14px; }
    .marks { display: flex; justify-content: space-between; margin-top: -2px; }
    .months { padding: 0 2px 0 8px; }
    .noon { font-size: 14px; }
    input[type="range"] { -webkit-appearance: none; appearance: none; display: block; width: 100%; height: 14px; margin: 0; background: none; }
    input[type="range"]::-webkit-slider-runnable-track {
      height: 9px; box-sizing: border-box; border-top: 2px solid #8c8c8c; border-left: 1px solid #8c8c8c; border-bottom: 2px solid #fff; border-right: 1px solid #fff;
    }
    .date::-webkit-slider-runnable-track { background: linear-gradient(90deg, #fff, #efc13c 35%, #f25a10 50%, #ee1010 67%, #f4a0a0 86%, #fff); }
    .time::-webkit-slider-runnable-track { background: linear-gradient(90deg, #fff, #8fb6d4 33%, #6478f4 66%, #1c2050 88%, #050505); }
    input[type="range"]::-webkit-slider-thumb {
      -webkit-appearance: none; width: 8px; height: 14px; margin-top: -4px; box-sizing: border-box;
      background: #f0f0f0; border: 1px solid #fff; border-right-color: #777; border-bottom-color: #777;
    }

    main { flex: 1; display: flex; min-height: 0; }
    aside { flex: none; width: 104px; }
    .box { display: grid; grid-template-columns: 50px 50px; padding: 10px 1px 1px 2px; position: relative; border-right: 1px solid #b4b4b4; border-bottom: 1px solid #a6a6a6; }
    .box::before {
      content: ""; position: absolute; top: 4px; left: 4px; right: 2px; height: 2px;
      background: repeating-linear-gradient(90deg, #b8b8b8 0 2px, transparent 2px 5px);
    }
    .box .sep { grid-column: 1 / 3; width: auto; height: 2px; margin: 2px 2px 4px; border: 0; border-top: 1px solid #808080; }
    model-view { border-top: 1px solid #6e6e6e; border-left: 2px solid #7d7d7d; margin-right: 1px; }

    footer { display: flex; align-items: center; height: 33px; padding: 0 0 2px 6px; border-top: 2px solid #fff; font-size: 20px; }
    footer button { width: 24px; height: 24px; padding: 0; border: 0; background: none; }
    footer button + button { margin-left: 16px; }
    footer svg { display: block; }
    .rule { width: 1px; height: 19px; margin: 0 10px 0 12px; background: #8c8c8c; }
    .hint { flex: 1; margin: 0; font-size: 21px; }
    .field { width: 300px; height: 24px; box-sizing: border-box; margin: 0 17px 0 10px; padding: 0 4px; border: 1px solid #abb3ca; background: #fff; }
    .grip { align-self: flex-end; margin-right: 3px; }
  `;

  render() {
    return html`
      <header>
        <div class="title">
          <svg class="logo" viewBox="0 0 22 24" aria-hidden="true">
            <path d="M2 4L14 1L20 6L19 19L8 23L5 20Z" fill="#d9262e"/><path d="M14 1L20 6L19 19L15 20Z" fill="#c01a22"/>
            <path d="M3 9L8 7M5 13L13 10V12M7 18L13 16" fill="none" stroke="#fff" stroke-width="2"/>
          </svg>
          <h1>스케치업 강좌 #5 - SketchUp 프로 2020 (평가판 17일 남음)</h1>
          <button class="win" aria-label="최소화"><svg viewBox="0 0 16 16"><path d="M0 7.500H15" stroke="#000"/></svg></button>
          <button class="win" aria-label="최대화"><svg viewBox="0 0 16 16"><path d="M.5.500H15.500V15.500H.5Z" fill="none" stroke="#000"/></svg></button>
          <button class="win" aria-label="닫기"><svg viewBox="0 0 16 16"><path d="M.5.500L15.500 15.500M15.500.500L.5 15.500" stroke="#000" stroke-width="1.200"/></svg></button>
        </div>
        <nav>${menus.map((m) => html`<button type="button">${m}</button>`)}</nav>
      </header>
      <div class="bar">
        <div class="group">${row(fileTools)}</div>
        <div class="group">${row(styleTools)}</div>
        <div class="group">
          <tool-button .tool=${t("shadow", "그림자 표시")}></tool-button>
          <div class="scale">
            <input class="date" type="range" min="0" max="100" value="93" aria-label="날짜" />
            <div class="marks months">${[..."JFMAMJJASOND"].map((m) => html`<span>${m}</span>`)}</div>
          </div>
          <div class="scale">
            <input class="time" type="range" min="0" max="100" value="3" aria-label="시간" />
            <div class="marks"><span>07:32 AM</span><span class="noon">정오</span><span>05:09 PM</span></div>
          </div>
        </div>
        <div class="group camera">${row(cameraTools)}</div>
        <div class="group views"><tool-button .tool=${t("house", "등각")}></tool-button></div>
        <div class="group last"><tool-button .tool=${t("section", "단면")}></tool-button></div>
      </div>
      <main>
        <aside><div class="box">${row(sideTools)}</div></aside>
        <model-view></model-view>
      </main>
      <footer>
        <button type="button" aria-label="위치"><svg width="24" height="24" viewBox="0 0 24 24">
          <circle cx="12" cy="12" r="10" fill="none" stroke="#a0a0a0" stroke-width="1.500"/>
          <path d="M12 20L10.500 14C7 12 7.500 5.500 12 5.500S17 12 13.500 14Z" fill="#929292"/></svg></button>
        <button type="button" aria-label="크레딧"><svg width="24" height="24" viewBox="0 0 24 24">
          <circle cx="12" cy="12" r="10" fill="#fff" stroke="#000" stroke-width="2"/>
          <circle cx="12" cy="7" r="2" fill="#000"/><path d="M9 10H15V14H14V19H10V14H9Z" fill="#000"/></svg></button>
        <span class="rule"></span>
        <p class="hint">측정을 시작할 점 또는 가장자리를 선택합니다. Ctrl = 만들기 안내선 토글</p>
        <span class="rule"></span>
        <label for="length">길이</label>
        <input id="length" class="field" type="text" />
        <svg class="grip" width="12" height="12" viewBox="0 0 12 12" aria-hidden="true">
          <path d="M8 0h3v3h-3zM4 4h3v3h-3zM8 4h3v3h-3zM0 8h3v3h-3zM4 8h3v3h-3zM8 8h3v3h-3z" fill="#b4b4b4"/></svg>
      </footer>
    `;
  }
}
